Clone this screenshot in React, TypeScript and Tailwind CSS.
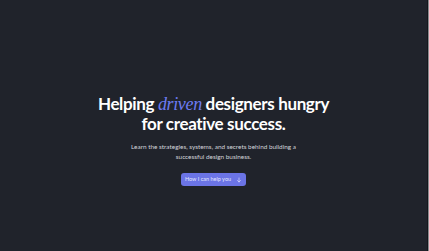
import React from "react";

export default function App() {
  return (
    <div className="flex h-[251px] w-full overflow-hidden bg-[#20232b]">
      <div className="flex flex-1 flex-col items-center pt-[94px]" style={{ fontFamily: "Lato, 'Liberation Sans', sans-serif" }}>
        <h1 className="text-center text-[17px] font-bold leading-[20px] tracking-[-0.35px] text-white">
          Helping{" "}
          <span className="text-[18px] font-normal italic text-[#6d7bf2]" style={{ fontFamily: "'Liberation Serif', serif" }}>
            driven
          </span>{" "}
          designers hungry
          <br />
          for creative success.
        </h1>
        <p className="mt-[8px] text-center text-[6.4px] leading-[10px] text-[#d4d6dc]">
          Learn the strategies, systems, and secrets behind building a
          <br />
          successful design business.
        </p>
        <button className="mt-[11px] flex h-[13px] w-[65px] items-center justify-center gap-[5px] rounded-[3px] bg-[#6b74e6] text-[5.5px] text-[#e3e4ff]">
          <span>How I can help you</span>
          <svg width="6" height="6" viewBox="0 0 24 24" fill="none" stroke="currentColor" strokeWidth="2.5" strokeLinecap="round" strokeLinejoin="round">
            <path d="M12 4v16" />
            <path d="M6 14l6 6 6-6" />
          </svg>
        </button>
      </div>
      <div className="flex h-full w-[2px] flex-none">
        <div className="h-full w-[1px] bg-[#15171c]" />
        <div className="h-full w-[1px] bg-[#8a8c90]" />
      </div>
    </div>
  );
}
